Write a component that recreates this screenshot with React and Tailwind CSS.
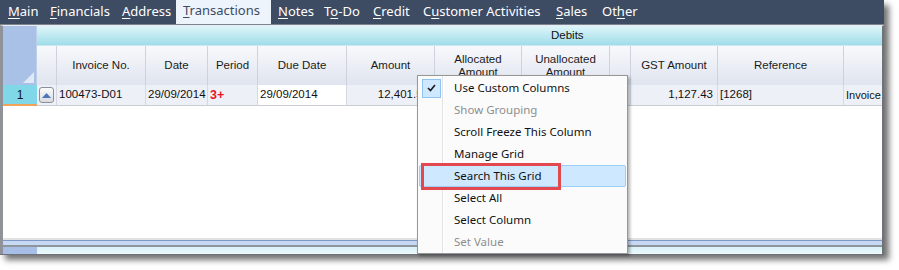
const tabs = [
  { label: "Main", u: 0, w: "w-[42px]" },
  { label: "Financials", u: 0, w: "w-[72px]" },
  { label: "Address", u: 0, w: "w-[61px]" },
  { label: "Transactions", u: 0, w: "w-[95px]", active: true },
  { label: "Notes", u: 0, w: "w-[46px]" },
  { label: "To-Do", u: 1, w: "w-[49px]" },
  { label: "Credit", u: 0, w: "w-[50px]" },
  { label: "Customer Activities", u: 1, w: "w-[133px]" },
  { label: "Sales", u: 0, w: "w-[46px]" },
  { label: "Other", u: 2, w: "w-[45px]" },
];

const columns = [
  { key: "exp", w: "w-[20px]", label: "" },
  { key: "inv", w: "w-[89px]", label: "Invoice No." },
  { key: "date", w: "w-[62px]", label: "Date" },
  { key: "period", w: "w-[50px]", label: "Period" },
  { key: "due", w: "w-[89px]", label: "Due Date" },
  { key: "amt", w: "w-[88px]", label: "Amount" },
  { key: "alloc", w: "w-[87px]", label: "Allocated Amount" },
  { key: "unalloc", w: "w-[88px]", label: "Unallocated Amount" },
  { key: "small", w: "w-[21px]", label: "" },
  { key: "gst", w: "w-[87px]", label: "GST Amount" },
  { key: "ref", w: "w-[126px]", label: "Reference" },
  { key: "last", w: "w-[60px]", label: "" },
];

const menuItems = [
  { label: "Use Custom Columns", checked: true },
  { label: "Show Grouping", disabled: true },
  { label: "Scroll Freeze This Column" },
  { label: "Manage Grid" },
  { label: "Search This Grid", hover: true },
  { label: "Select All" },
  { label: "Select Column" },
  { label: "Set Value", disabled: true },
];

function TabLabel({ label, u }) {
  return (
    <span>
      {label.slice(0, u)}
      <span className="underline underline-offset-2">{label[u]}</span>
      {label.slice(u + 1)}
    </span>
  );
}

function HeaderCell({ col }) {
  const lines = col.label.split(" ");
  const twoLine = col.key === "alloc" || col.key === "unalloc";
  return (
    <div
      className={`${col.w} shrink-0 h-full border-r border-[#cdd2dc] flex flex-col items-center justify-center text-center leading-[13px] text-[#1b1b1b]`}
    >
      {twoLine ? (
        <>
          <span>{lines[0]}</span>
          <span>{lines[1]}</span>
        </>
      ) : (
        <span>{col.label}</span>
      )}
    </div>
  );
}

function DataCell({ col }) {
  const base = `${col.w} shrink-0 h-full border-r border-[#d4d8e2] flex items-center px-[2px] whitespace-nowrap overflow-hidden`;
  switch (col.key) {
    case "exp":
      return (
        <div className={`${base} justify-center bg-[#eef0f8]`}>
          <div className="w-[16px] h-[16px] rounded-[3px] border border-[#8a8f99] bg-gradient-to-b from-[#fbfbfb] to-[#d9dbe0] flex items-center justify-center">
            <svg width="9" height="5" viewBox="0 0 9 5">
              <polygon points="0,5 4.5,0 9,5" fill="#4a76b8" />
            </svg>
          </div>
        </div>
      );
    case "inv":
      return <div className={`${base} bg-[#eef0f8]`}>100473-D01</div>;
    case "date":
      return <div className={`${base} bg-[#eef0f8]`}>29/09/2014</div>;
    case "period":
      return (
        <div className={`${base} bg-[#eef0f8] text-[#e8131b] font-bold text-[12.5px]`}>3+</div>
      );
    case "due":
      return <div className={`${base} bg-white`}>29/09/2014</div>;
    case "amt":
      return (
        <div className={`${base} bg-[#eef0f8] justify-end`}>
          <span className="mr-[3px]">12,401.59</span>
        </div>
      );
    case "gst":
      return <div className={`${base} bg-[#eef0f8] justify-end pr-[4px]`}>1,127.43</div>;
    case "ref":
      return <div className={`${base} bg-[#eef0f8]`}>[1268]</div>;
    case "last":
      return <div className={`${base} bg-[#eef0f8] text-[11px]`}>Invoice</div>;
    default:
      return <div className={`${base} bg-[#eef0f8]`} />;
  }
}

function ContextMenu() {
  return (
    <div className="absolute left-[417px] top-[75px] w-[211px] h-[179px] bg-[#fbfbfb] border border-[#979797] shadow-[2px_2px_3px_rgba(0,0,0,0.3)] pt-[1px] font-['Noto_Sans',sans-serif] text-[11.5px]">
      <div className="absolute left-[24px] top-0 bottom-0 w-[1px] bg-[#e3e3e3]" />
      <div className="absolute left-[25px] top-0 bottom-0 w-[1px] bg-white" />
      <div className="relative flex flex-col px-[1px]">
        {menuItems.map((item) => (
          <div
            key={item.label}
            className={`h-[22px] flex items-center rounded-[2px] border ${
              item.hover ? "bg-[#cde8ff] border-[#9bcdf7]" : "border-transparent"
            }`}
          >
            <div className="w-[34px] shrink-0 flex items-center pl-[2px]">
              {item.checked && (
                <div className="w-[19px] h-[19px] bg-[#cde8ff] border border-[#8fc4f2] flex items-center justify-center">
                  <svg width="9" height="8" viewBox="0 0 9 8">
                    <path d="M1 4 L3.5 6.5 L8 1" stroke="#1a1a1a" strokeWidth="1.6" fill="none" />
                  </svg>
                </div>
              )}
            </div>
            <span className={item.disabled ? "text-[#8e8e8e]" : "text-[#111]"}>{item.label}</span>
          </div>
        ))}
      </div>
      <div className="absolute left-[3px] top-[87px] w-[140px] h-[27px] border-[3px] border-[#e2484d]" />
    </div>
  );
}

export default function App() {
  return (
    <div className="relative w-[899px] h-[270px] bg-white overflow-hidden">
      <div className="w-[884px] h-[255px] flex flex-col bg-white shadow-[5px_5px_6px_rgba(0,0,0,0.55)]">
        {/* tab strip */}
        <div className="h-[25px] shrink-0 bg-[#3d4b63] flex items-end pl-[1px] font-['Noto_Sans',sans-serif] text-[13px] text-white border-b border-[#7d8590]">
          {tabs.map((t) => (
            <div
              key={t.label}
              className={`${t.w} shrink-0 h-[24px] pl-[7px] flex items-center whitespace-nowrap ${
                t.active ? "bg-[#eef4fb] text-[#3d4b63] pb-[3px]" : "pb-[1px]"
              }`}
            >
              <TabLabel label={t.label} u={t.u} />
            </div>
          ))}
        </div>

        {/* grid */}
        <div className="flex-1 flex flex-col border-l-[3px] border-r-[2px] border-l-[#8f9399] border-r-[#6f7379] border-t border-t-[#e8ecf2] font-['Liberation_Sans',sans-serif] text-[11.5px] text-[#111] overflow-hidden">
          <div className="flex-1 flex min-h-0">
            {/* row selector column */}
            <div className="w-[34px] shrink-0 flex flex-col">
              <div className="h-[59px] bg-[#a9c1e7] border-r border-[#c0cfe8] flex items-end justify-end p-[2px]">
                <svg width="11" height="11" viewBox="0 0 11 11">
                  <polygon points="11,0 11,11 0,11" fill="#dfe9f7" />
                </svg>
              </div>
              <div className="h-[21px] bg-[#7fd7e7] border-b-2 border-[#f0a45a] flex items-center justify-center text-[12px]">
                1
              </div>
            </div>
            {/* columns */}
            <div className="flex-1 flex flex-col min-w-0">
              <div className="h-[19px] shrink-0 bg-gradient-to-b from-[#def5f9] to-[#9fdde9] flex items-center pl-[514px]">
                Debits
              </div>
              <div className="h-[40px] shrink-0 flex bg-gradient-to-b from-[#f8f9fc] to-[#dfe4ee] border-t border-[#c8e9f0]">
                {columns.map((c) => (
                  <HeaderCell key={c.key} col={c} />
                ))}
              </div>
              <div className="h-[21px] shrink-0 flex border-b border-[#c9ccd3]">
                {columns.map((c) => (
                  <DataCell key={c.key} col={c} />
                ))}
              </div>
              <div className="flex-1 bg-white" />
            </div>
          </div>
          <div className="h-[2px] bg-[#e2e2e2]" />
          <div className="h-[5px] bg-[#c7d8f2] border-t border-[#7f99c6]" />
          <div className="h-[2px] bg-[#8f959c]" />
          <div className="h-[7px] flex bg-gradient-to-b from-[#d6f1f7] to-[#eefafc]">
            <div className="w-[34px] bg-[#a7bfe6]" />
          </div>
        </div>
        <div className="h-[1px] bg-[#6f7379]" />
      </div>
      <ContextMenu />
    </div>
  );
}
